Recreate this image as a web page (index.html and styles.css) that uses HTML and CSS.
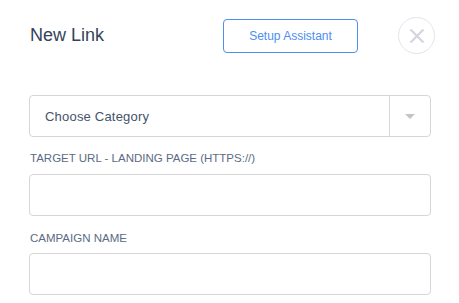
FILE: index.html
```html
<!DOCTYPE html>
<html>
<head>
<meta charset="utf-8">
<link rel="stylesheet" href="styles.css">
</head>
<body>
<div class="modal">
  <div class="header">
    <h1 class="title">New Link</h1>
    <button class="assist">Setup Assistant</button>
    <button class="close" aria-label="Close">
      <svg width="16" height="16" viewBox="0 0 16 16"><path d="M1.5 1.5L14.5 14.5M14.5 1.5L1.5 14.5" stroke="#d3d6dd" stroke-width="2.2" fill="none"/></svg>
    </button>
  </div>
  <div class="select">
    <span class="select-text">Choose Category</span>
    <span class="select-arrow"><span class="caret"></span></span>
  </div>
  <label class="label label-first">TARGET URL - LANDING PAGE (HTTPS://)</label>
  <div class="input"></div>
  <label class="label">CAMPAIGN NAME</label>
  <div class="input"></div>
</div>
</body>
</html>
```
FILE: styles.css
```css
html, body {
  margin: 0;
  padding: 0;
  background: #ffffff;
  font-family: "Liberation Sans", Arial, sans-serif;
}
.modal {
  padding: 17px 28px 0 29px;
  width: 402px;
}
.header {
  display: flex;
  align-items: center;
  height: 37px;
}
.header > * {
  flex: none;
}
.title {
  margin: 0 0 0 1px;
  width: 193px;
  font-size: 18px;
  font-weight: normal;
  color: #34435a;
}
.assist {
  box-sizing: border-box;
  width: 135px;
  height: 34px;
  border: 1px solid #4f8ff0;
  border-radius: 4px;
  background: #fff;
  color: #4d8ef2;
  font-family: "Liberation Sans", Arial, sans-serif;
  font-size: 12px;
  padding: 0;
}
.close {
  box-sizing: border-box;
  margin-left: 40px;
  width: 37px;
  height: 37px;
  border-radius: 50%;
  border: 1.5px solid #e3e5ec;
  background: #fff;
  padding: 0;
  display: flex;
  align-items: center;
  justify-content: center;
}
.close svg { display: block; }
.select {
  box-sizing: border-box;
  margin-top: 41px;
  height: 42px;
  border: 1px solid #d6d6d6;
  border-radius: 4px;
  display: flex;
  align-items: center;
}
.select-text {
  flex: 1;
  padding-left: 15px;
  font-size: 13px;
  letter-spacing: 0.2px;
  color: #45536a;
}
.select-arrow {
  align-self: stretch;
  width: 40px;
  border-left: 1px solid #d6d6d6;
  display: flex;
  align-items: center;
  justify-content: center;
}
.caret {
  width: 0;
  height: 0;
  border-left: 5px solid transparent;
  border-right: 5px solid transparent;
  border-top: 5px solid #c4c4c4;
}
.label {
  display: block;
  margin: 15px 0 8px 1px;
  font-size: 11.5px;
  line-height: 14px;
  color: #5c6b85;
}
.label-first {
  margin-top: 14px;
  margin-bottom: 9px;
}
.input {
  box-sizing: border-box;
  height: 42px;
  border: 1px solid #d6d6d6;
  border-radius: 4px;
}
```
